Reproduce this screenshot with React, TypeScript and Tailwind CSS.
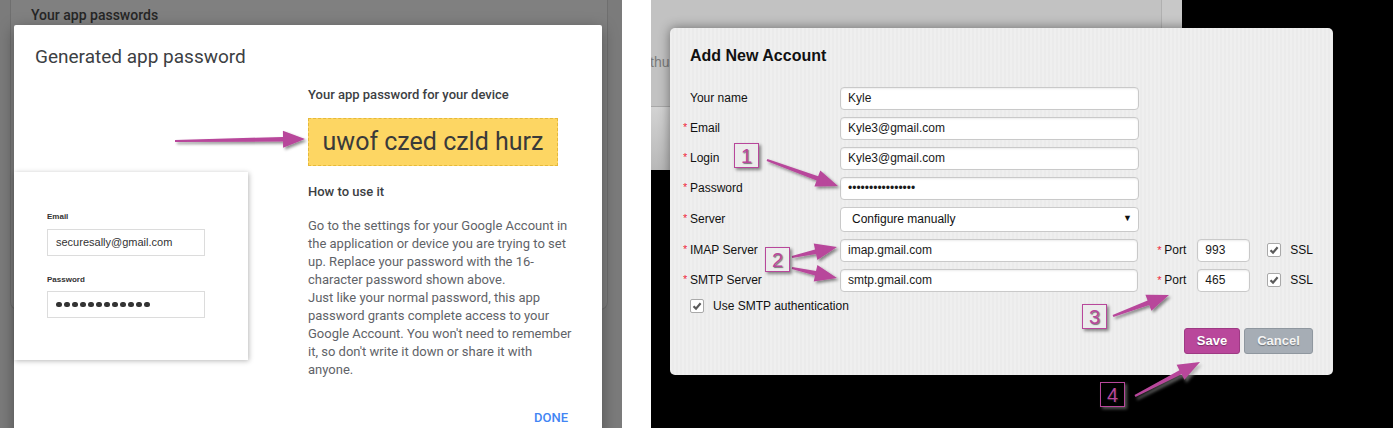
import React from "react";

// arrow colour used by all the annotations
const MAGENTA = "#b8479b";

// builds the polygon for a fat annotation arrow (shaft + head)
function arrowPoints(x1: number, y1: number, x2: number, y2: number, head = 22, half = 8.5, shaft = 2.3) {
    const dx = x2 - x1;
    const dy = y2 - y1;
    const len = Math.hypot(dx, dy);
    const ux = dx / len;
    const uy = dy / len;
    const nx = -uy;
    const ny = ux;
    const bx = x2 - ux * head;
    const by = y2 - uy * head;
    const pts = [
        [x1 + nx * 1.1, y1 + ny * 1.1],
        [bx + nx * shaft, by + ny * shaft],
        [bx + nx * half, by + ny * half],
        [x2, y2],
        [bx - nx * half, by - ny * half],
        [bx - nx * shaft, by - ny * shaft],
        [x1 - nx * 1.1, y1 - ny * 1.1],
    ];
    return pts.map((p) => p.map((v) => v.toFixed(1)).join(",")).join(" ");
}

// [x1, y1, x2, y2, onDark]
const arrows: [number, number, number, number, boolean][] = [
    [175, 141, 305, 139, false],
    [767, 160, 838, 186, false],
    [792, 257, 837, 247, false],
    [792, 268, 837, 278, false],
    [1113, 316, 1169, 295, false],
    [1135, 396, 1200, 362, true],
];

const Callout = ({ n, className, dark }: { n: string; className: string; dark?: boolean }) => (
    <div
        className={`absolute w-[25px] h-[25px] border border-[#b8479b] flex items-center justify-center text-[20px] leading-none text-[#b8479b] font-['Liberation_Sans',Arial,sans-serif] [text-shadow:1px_1px_1px_rgba(40,40,40,0.6)] ${dark ? "bg-black shadow-[2px_2px_3px_rgba(140,140,140,0.6)]" : "bg-[#ececec] shadow-[2px_2px_3px_rgba(0,0,0,0.45)]"} ${className}`}
    >
        {n}
    </div>
);

const CheckBox = () => (
    <div className="w-[14px] h-[14px] shrink-0 bg-white border border-[#a9a9a9] rounded-[2px] flex items-center justify-center">
        <svg width="10" height="10" viewBox="0 0 10 10">
            <path d="M1.5 5.2 L4 7.6 L8.6 2.2" fill="none" stroke="#5a5a5a" strokeWidth="2.2" />
        </svg>
    </div>
);

const inputCls =
    "h-[23px] bg-white border border-[#c9c9c9] rounded-[4px] shadow-[inset_0_1px_2px_rgba(0,0,0,0.08)] pl-[7px] text-[12px] text-[#1a1a1a] outline-none font-['Liberation_Sans',Arial,sans-serif]";

const Row = ({ label, required, children, tall }: { label: string; required?: boolean; children: React.ReactNode; tall?: boolean }) => (
    <div className={`flex items-center ${tall ? "h-[32px]" : "h-[30px]"}`}>
        <div className="w-[157px] flex shrink-0">
            <span className="w-[7px] text-[#f0263c] text-[11px]">{required ? "*" : ""}</span>
            <span>{label}</span>
        </div>
        {children}
    </div>
);

const PortGroup = ({ port }: { port: string }) => (
    <div className="flex items-center ml-[19px]">
        <span className="w-[7px] text-[#f0263c] text-[11px]">*</span>
        <span>Port</span>
        <input readOnly defaultValue={port} className={`${inputCls} w-[53px] ml-[11px]`} />
        <div className="ml-[17px]">
            <CheckBox />
        </div>
        <span className="ml-[9px]">SSL</span>
    </div>
);

const App = () => {
    return (
        <div className="relative flex w-[1393px] h-[428px] overflow-hidden bg-white">
            {/* Left screenshot: Google app password */}
            <div className="relative w-[622px] h-full shrink-0 bg-[#7b7b7b] overflow-hidden font-['Roboto',sans-serif]">
                <div className="ml-[10px] w-[598px] h-[310px] bg-[#808080] border-x border-b border-[#6f6f6f] rounded-b-[8px] pl-[20px] pt-[6px]">
                    <div className="text-[14px] leading-[18px] font-medium text-[#262626]">Your app passwords</div>
                </div>

                <div className="absolute left-[14px] top-[25px] w-[588px] h-[420px] bg-white rounded-[2px] shadow-[0_4px_16px_rgba(0,0,0,0.35)]">
                    <div className="pt-[20px] pl-[21px] text-[19px] leading-[24px] text-[#3c4043]">Generated app password</div>

                    <div className="flex items-start mt-[17px]">
                        {/* mock login card */}
                        <div className="w-[234px] mt-[86px] bg-white shadow-[1px_1px_5px_rgba(0,0,0,0.28)] pl-[33px] pt-[40px] pb-[42px] font-['Liberation_Sans',Arial,sans-serif]">
                            <div className="text-[8px] leading-[10px] font-bold text-[#333]">Email</div>
                            <div className="mt-[7px] w-[158px] h-[27px] border border-[#dcdcdc] flex items-center pl-[8px] text-[11px] text-[#333]">
                                securesally@gmail.com
                            </div>
                            <div className="mt-[19px] text-[8px] leading-[10px] font-bold text-[#333]">Password</div>
                            <div className="mt-[6px] w-[158px] h-[27px] border border-[#dcdcdc] flex items-center gap-[2.5px] pl-[8px]">
                                {Array.from({ length: 12 }).map((_, i) => (
                                    <div key={i} className="w-[5.5px] h-[5.5px] rounded-full bg-[#333]" />
                                ))}
                            </div>
                        </div>

                        {/* instructions */}
                        <div className="ml-[60px] w-[262px]">
                            <div className="text-[13px] leading-[18px] font-medium text-[#3c4043]">Your app password for your device</div>
                            <div className="mt-[14px] w-[250px] h-[48px] bg-[#fdd663] border border-dashed border-[#e6b93a] flex items-center justify-center text-[25px] text-[#3a3a3a]">
                                uwof czed czld hurz
                            </div>
                            <div className="mt-[17px] text-[13px] leading-[18px] font-medium text-[#3c4043]">How to use it</div>
                            <div className="mt-[16px] text-[13px] leading-[18px] text-[#5f6368] whitespace-nowrap">
                                Go to the settings for your Google Account in
                                <br />
                                the application or device you are trying to set
                                <br />
                                up. Replace your password with the 16-
                                <br />
                                character password shown above.
                                <br />
                                Just like your normal password, this app
                                <br />
                                password grants complete access to your
                                <br />
                                Google Account. You won't need to remember
                                <br />
                                it, so don't write it down or share it with
                                <br />
                                anyone.
                            </div>
                            <div className="mt-[30px] flex justify-end pr-[2px] text-[13px] leading-[18px] font-medium text-[#4285f4]">DONE</div>
                        </div>
                    </div>
                </div>
            </div>

            {/* spacer between the two screenshots */}
            <div className="w-[29px] h-full shrink-0 bg-white" />

            {/* Right screenshot: Add New Account */}
            <div className="relative flex-1 h-full bg-black overflow-hidden">
                <div className="w-[531px] h-[170px] flex flex-col">
                    <div className="h-[107px] flex bg-[#c2c2c2] border-b border-[#a8a8a8]">
                        <div className="w-[511px] border-r border-[#b0b0b0] pt-[53px] font-['Liberation_Sans',Arial,sans-serif] text-[14px] leading-[18px] text-[#7a7a7a]">
                            <span className="ml-[-1px]">thus</span>
                        </div>
                        <div className="flex-1 bg-[#c8c8c8]" />
                    </div>
                    <div className="flex-1 bg-gradient-to-b from-[#d3d3d3] to-[#b8b8b8]" />
                </div>

                <div className="absolute left-[19px] top-[28px] w-[663px] h-[347px] rounded-[5px] bg-[#eeeeee] bg-[image:repeating-linear-gradient(90deg,#efefef_0px,#efefef_2px,#ebebeb_2px,#ebebeb_4px)] shadow-[0_0_12px_rgba(0,0,0,0.45)] pt-[18px] pl-[13px] pr-[20px] font-['Liberation_Sans',Arial,sans-serif] text-[12px] text-[#111]">
                    <div className="pl-[7px] text-[16px] leading-[20px] font-bold mb-[17px]">Add New Account</div>

                    <Row label="Your name">
                        <input readOnly defaultValue="Kyle" className={`${inputCls} w-[299px]`} />
                    </Row>
                    <Row label="Email" required>
                        <input readOnly defaultValue="Kyle3@gmail.com" className={`${inputCls} w-[299px]`} />
                    </Row>
                    <Row label="Login" required>
                        <input readOnly defaultValue="Kyle3@gmail.com" className={`${inputCls} w-[299px]`} />
                    </Row>
                    <Row label="Password" required>
                        <input readOnly type="password" defaultValue="kylepassword1234" className={`${inputCls} w-[299px]`} />
                    </Row>
                    <Row label="Server" required tall>
                        <div className="w-[299px] h-[25px] bg-white border border-[#c9c9c9] rounded-[4px] flex items-center justify-between pl-[11px] pr-[6px]">
                            <span>Configure manually</span>
                            <span className="text-[9px]">▼</span>
                        </div>
                    </Row>
                    <Row label="IMAP Server" required>
                        <input readOnly defaultValue="imap.gmail.com" className={`${inputCls} w-[299px]`} />
                        <PortGroup port="993" />
                    </Row>
                    <Row label="SMTP Server" required>
                        <input readOnly defaultValue="smtp.gmail.com" className={`${inputCls} w-[299px]`} />
                        <PortGroup port="465" />
                    </Row>

                    <div className="flex items-center h-[20px] pl-[7px] mt-[1px]">
                        <CheckBox />
                        <span className="ml-[9px]">Use SMTP authentication</span>
                    </div>

                    <div className="flex justify-end gap-[4px] mt-[12px]">
                        <button className="w-[56px] h-[26px] rounded-[3px] bg-[#b9479b] border border-[#9e3a84] text-white text-[13px] font-bold [text-shadow:0_1px_1px_rgba(0,0,0,0.35)]">
                            Save
                        </button>
                        <button className="w-[69px] h-[26px] rounded-[3px] bg-[#a6adb5] border border-[#8f979f] text-[#f4f4f4] text-[13px] font-bold [text-shadow:0_1px_1px_rgba(0,0,0,0.35)]">
                            Cancel
                        </button>
                    </div>
                </div>
            </div>

            {/* annotation arrows over both screenshots */}
            <svg className="absolute inset-0 pointer-events-none" width="1393" height="428">
                <defs>
                    <filter id="arrowShadow" x="-10%" y="-30%" width="130%" height="160%">
                        <feDropShadow dx="2" dy="2" stdDeviation="1.5" floodColor="#000" floodOpacity="0.45" />
                    </filter>
                    <filter id="arrowShadowDark" x="-10%" y="-30%" width="130%" height="160%">
                        <feDropShadow dx="2" dy="3" stdDeviation="1.5" floodColor="#999" floodOpacity="0.6" />
                    </filter>
                </defs>
                {arrows.map(([x1, y1, x2, y2, dark], i) => (
                    <polygon
                        key={i}
                        points={arrowPoints(x1, y1, x2, y2)}
                        fill={MAGENTA}
                        filter={dark ? "url(#arrowShadowDark)" : "url(#arrowShadow)"}
                    />
                ))}
            </svg>

            <Callout n="1" className="left-[734px] top-[143px]" />
            <Callout n="2" className="left-[765px] top-[247px]" />
            <Callout n="3" className="left-[1082px] top-[304px]" />
            <Callout n="4" className="left-[1100px] top-[382px]" dark />
        </div>
    );
};

export default App;
